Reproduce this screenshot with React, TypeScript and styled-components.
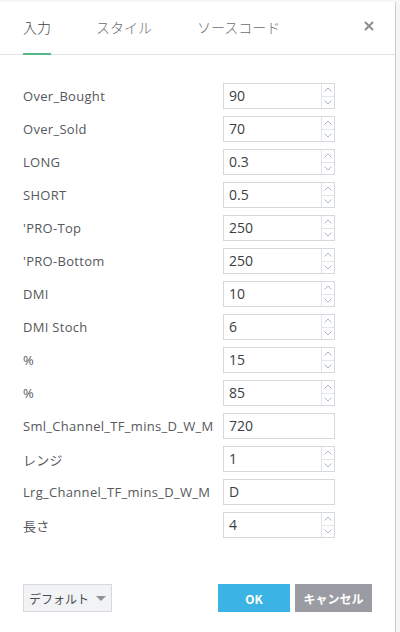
import React from 'react';
import styled, { createGlobalStyle } from 'styled-components';

const GlobalStyle = createGlobalStyle`
  html, body {
    margin: 0;
    padding: 0;
    background: #f4f6f8;
  }
  body {
    font-family: "Open Sans", "Noto Sans CJK JP", sans-serif;
  }
`;

interface IParam {
  label: string;
  value: string;
  spinner: boolean;
}

const params: IParam[] = [
  { label: 'Over_Bought', value: '90', spinner: true },
  { label: 'Over_Sold', value: '70', spinner: true },
  { label: 'LONG', value: '0.3', spinner: true },
  { label: 'SHORT', value: '0.5', spinner: true },
  { label: "'PRO-Top", value: '250', spinner: true },
  { label: "'PRO-Bottom", value: '250', spinner: true },
  { label: 'DMI', value: '10', spinner: true },
  { label: 'DMI Stoch', value: '6', spinner: true },
  { label: '%', value: '15', spinner: true },
  { label: '%', value: '85', spinner: true },
  { label: 'Sml_Channel_TF_mins_D_W_M', value: '720', spinner: false },
  { label: 'レンジ', value: '1', spinner: true },
  { label: 'Lrg_Channel_TF_mins_D_W_M', value: 'D', spinner: false },
  { label: '長さ', value: '4', spinner: true },
];

const Dialog = styled.div`
  margin-top: 2px;
  width: 396px;
  height: 630px;
  box-sizing: border-box;
  background: #fff;
  border-right: 1px solid #c9cbcf;
  display: flex;
  flex-direction: column;
`;

const TabBar = styled.div`
  height: 52px;
  border-bottom: 1px solid #e0e3e6;
  display: flex;
  align-items: stretch;
  padding-left: 23px;
  position: relative;
`;

const Tab = styled.div<{ $active?: boolean }>`
  font-family: "Noto Sans CJK JP", sans-serif;
  font-size: 14px;
  font-weight: 300;
  color: ${p => (p.$active ? '#3c3f44' : '#6a6d73')};
  margin-right: 45px;
  display: flex;
  align-items: center;
  padding-bottom: 2px;
  box-sizing: border-box;
  border-bottom: 2px solid ${p => (p.$active ? '#53b987' : 'transparent')};
  margin-bottom: -1px;
`;

const Close = styled.div`
  position: absolute;
  right: 21px;
  top: 19px;
  width: 10px;
  height: 10px;
  display: flex;
`;

const Body = styled.div`
  flex: 1;
  padding: 28px 0 0 23px;
  display: flex;
  flex-direction: column;
  gap: 7px;
`;

const Row = styled.div`
  display: flex;
  align-items: center;
  height: 26px;
`;

const Label = styled.div`
  width: 200px;
  font-size: 13px;
  letter-spacing: 0.3px;
  color: #55585d;
  white-space: nowrap;
`;

const InputBox = styled.div`
  width: 112px;
  height: 26px;
  box-sizing: border-box;
  border: 1px solid #d5d8dc;
  display: flex;
`;

const Value = styled.div`
  flex: 1;
  padding-left: 5px;
  font-size: 14px;
  line-height: 24px;
  color: #3b3e43;
  font-family: "Open Sans", sans-serif;
`;

const Spinner = styled.div`
  width: 12px;
  border-left: 1px solid #e2e5e8;
  display: flex;
  flex-direction: column;
`;

const SpinHalf = styled.div<{ $top?: boolean }>`
  flex: 1;
  display: flex;
  align-items: center;
  justify-content: center;
  border-bottom: ${p => (p.$top ? '1px solid #e2e5e8' : 'none')};
`;

const Footer = styled.div`
  height: 28px;
  padding: 0 23px 20px 23px;
  display: flex;
  align-items: center;
`;

const DefaultButton = styled.div`
  width: 89px;
  height: 28px;
  box-sizing: border-box;
  background: #f2f3f5;
  border: 1px solid #d6d9dd;
  display: flex;
  align-items: center;
  justify-content: center;
  gap: 7px;
  font-family: "Noto Sans CJK JP", sans-serif;
  font-size: 12px;
  color: #4a4d52;
`;

const Caret = styled.span`
  width: 0;
  height: 0;
  border-left: 5px solid transparent;
  border-right: 5px solid transparent;
  border-top: 5px solid #8f9297;
`;

const Spacer = styled.div`
  flex: 1;
`;

const ActionButton = styled.div<{ $color: string; $width: number }>`
  width: ${p => p.$width}px;
  height: 28px;
  background: ${p => p.$color};
  color: #fff;
  font-weight: bold;
  font-family: "Noto Sans CJK JP", sans-serif;
  font-size: 12px;
  display: flex;
  align-items: center;
  justify-content: center;
  margin-left: 5px;
`;

const Chevron: React.FC<{ up?: boolean }> = ({ up }) => (
  <svg width="8" height="5" viewBox="0 0 8 5">
    <path
      d={up ? 'M0.5 4.5 L4 1 L7.5 4.5' : 'M0.5 0.5 L4 4 L7.5 0.5'}
      fill="none"
      stroke="#a9b7c6"
      strokeWidth="1"
    />
  </svg>
);

const App: React.FC = () => {
  return (
    <React.Fragment>
      <GlobalStyle />
      <Dialog>
        <TabBar>
          <Tab $active>入力</Tab>
          <Tab>スタイル</Tab>
          <Tab>ソースコード</Tab>
          <Close>
            <svg width="10" height="10" viewBox="0 0 10 10">
              <path d="M1 1 L9 9 M9 1 L1 9" stroke="#8a8d93" strokeWidth="2" />
            </svg>
          </Close>
        </TabBar>

        <Body>
          {params.map((param, i) => (
            <Row key={i}>
              <Label>{param.label}</Label>
              <InputBox>
                <Value>{param.value}</Value>
                {param.spinner && (
                  <Spinner>
                    <SpinHalf $top>
                      <Chevron up />
                    </SpinHalf>
                    <SpinHalf>
                      <Chevron />
                    </SpinHalf>
                  </Spinner>
                )}
              </InputBox>
            </Row>
          ))}
        </Body>

        <Footer>
          <DefaultButton>
            デフォルト <Caret />
          </DefaultButton>
          <Spacer />
          <ActionButton $color="#3bb3e4" $width={72}>OK</ActionButton>
          <ActionButton $color="#9b9ca3" $width={77}>キャンセル</ActionButton>
        </Footer>
      </Dialog>
    </React.Fragment>
  );
};

export default App;
